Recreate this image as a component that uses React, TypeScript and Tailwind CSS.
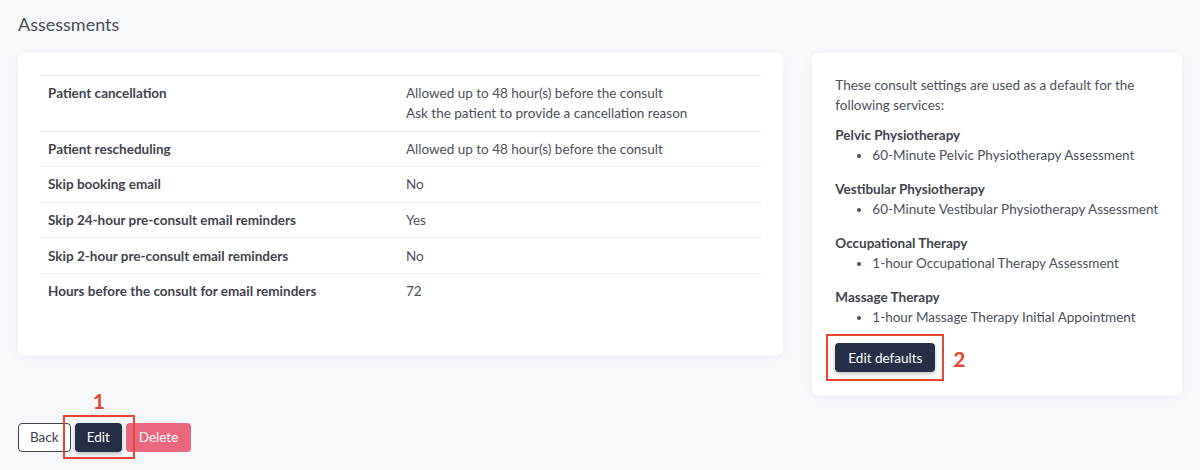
const rows: { label: string; values: string[] }[] = [
  {
    label: "Patient cancellation",
    values: [
      "Allowed up to 48 hour(s) before the consult",
      "Ask the patient to provide a cancellation reason",
    ],
  },
  { label: "Patient rescheduling", values: ["Allowed up to 48 hour(s) before the consult"] },
  { label: "Skip booking email", values: ["No"] },
  { label: "Skip 24-hour pre-consult email reminders", values: ["Yes"] },
  { label: "Skip 2-hour pre-consult email reminders", values: ["No"] },
  { label: "Hours before the consult for email reminders", values: ["72"] },
];

const services: { group: string; items: string[] }[] = [
  { group: "Pelvic Physiotherapy", items: ["60-Minute Pelvic Physiotherapy Assessment"] },
  { group: "Vestibular Physiotherapy", items: ["60-Minute Vestibular Physiotherapy Assessment"] },
  { group: "Occupational Therapy", items: ["1-hour Occupational Therapy Assessment"] },
  { group: "Massage Therapy", items: ["1-hour Massage Therapy Initial Appointment"] },
];

/** Red callout box drawn over a control, with a step number beside it */
function Callout({ className, num, numClass }: { className: string; num: string; numClass: string }) {
  return (
    <>
      <span className={`pointer-events-none absolute border-2 border-[#e8452f] ${className}`} />
      <span className={`pointer-events-none absolute text-[21px] font-bold leading-none text-[#e8452f] ${numClass}`}>
        {num}
      </span>
    </>
  );
}

export default function App() {
  return (
    <div className="min-h-[470px] bg-[#f7f8fc] px-[18px] pt-[13px] font-['Lato',sans-serif] text-[13.5px] text-[#4b505b]">
      <h1 className="text-[18px] leading-[22px] text-[#4a4d55]">Assessments</h1>

      <div className="mt-[18px] flex items-start gap-[29px]">
        {/* ── Settings table ── */}
        <div className="w-[766px] rounded-md bg-white px-[22px] pt-[22px] pb-[46px] shadow-[0_2px_12px_rgba(30,40,80,0.05)]">
          <div className="border-t border-[#e9ecf1]">
            {rows.map((r, i) => (
              <div
                key={r.label}
                className={`grid grid-cols-[366px_1fr] py-[7.3px] leading-5 ${i < rows.length - 1 ? "border-b border-[#e9ecf1]" : ""}`}
              >
                <div className="pl-2 font-bold text-[#3f434d]">{r.label}</div>
                <div>
                  {r.values.map((v) => (
                    <div key={v}>{v}</div>
                  ))}
                </div>
              </div>
            ))}
          </div>
        </div>

        {/* ── Default services card ── */}
        <div className="w-[370px] rounded-md bg-white pl-[23px] pr-[18px] pt-[22px] pb-[23px] leading-5 shadow-[0_2px_12px_rgba(30,40,80,0.05)]">
          <p>These consult settings are used as a default for the following services:</p>
          <div className="mt-[10px] flex flex-col gap-[14px]">
            {services.map((s) => (
              <div key={s.group}>
                <div className="font-bold text-[#3f434d]">{s.group}</div>
                <ul className="list-disc pl-[37px]">
                  {s.items.map((it) => (
                    <li key={it}>{it}</li>
                  ))}
                </ul>
              </div>
            ))}
          </div>
          <div className="relative mt-4 inline-block">
            <button className="h-[29px] rounded bg-[#272f48] px-[13px] text-white shadow-[0_2px_4px_rgba(0,0,0,0.25)]">
              Edit defaults
            </button>
            <Callout className="-inset-x-[9px] -inset-y-[9px]" num="2" numClass="left-[calc(100%+18px)] top-[5px]" />
          </div>
        </div>
      </div>

      {/* ── Footer actions ── */}
      <div className="mt-[28px] flex gap-1">
        <button className="h-[29px] rounded border border-[#3f434d] bg-white px-[11px] text-[#3f434d]">
          Back
        </button>
        <div className="relative">
          <button className="h-[29px] rounded bg-[#272f48] px-3 text-white shadow-[0_2px_4px_rgba(0,0,0,0.25)]">
            Edit
          </button>
          <Callout className="-left-[12px] -right-[13px] -top-[8px] -bottom-[7px]" num="1" numClass="left-[18px] -top-[33px]" />
        </div>
        <button className="h-[29px] rounded bg-[#e9687f] px-[13px] text-white">Delete</button>
      </div>
    </div>
  );
}
